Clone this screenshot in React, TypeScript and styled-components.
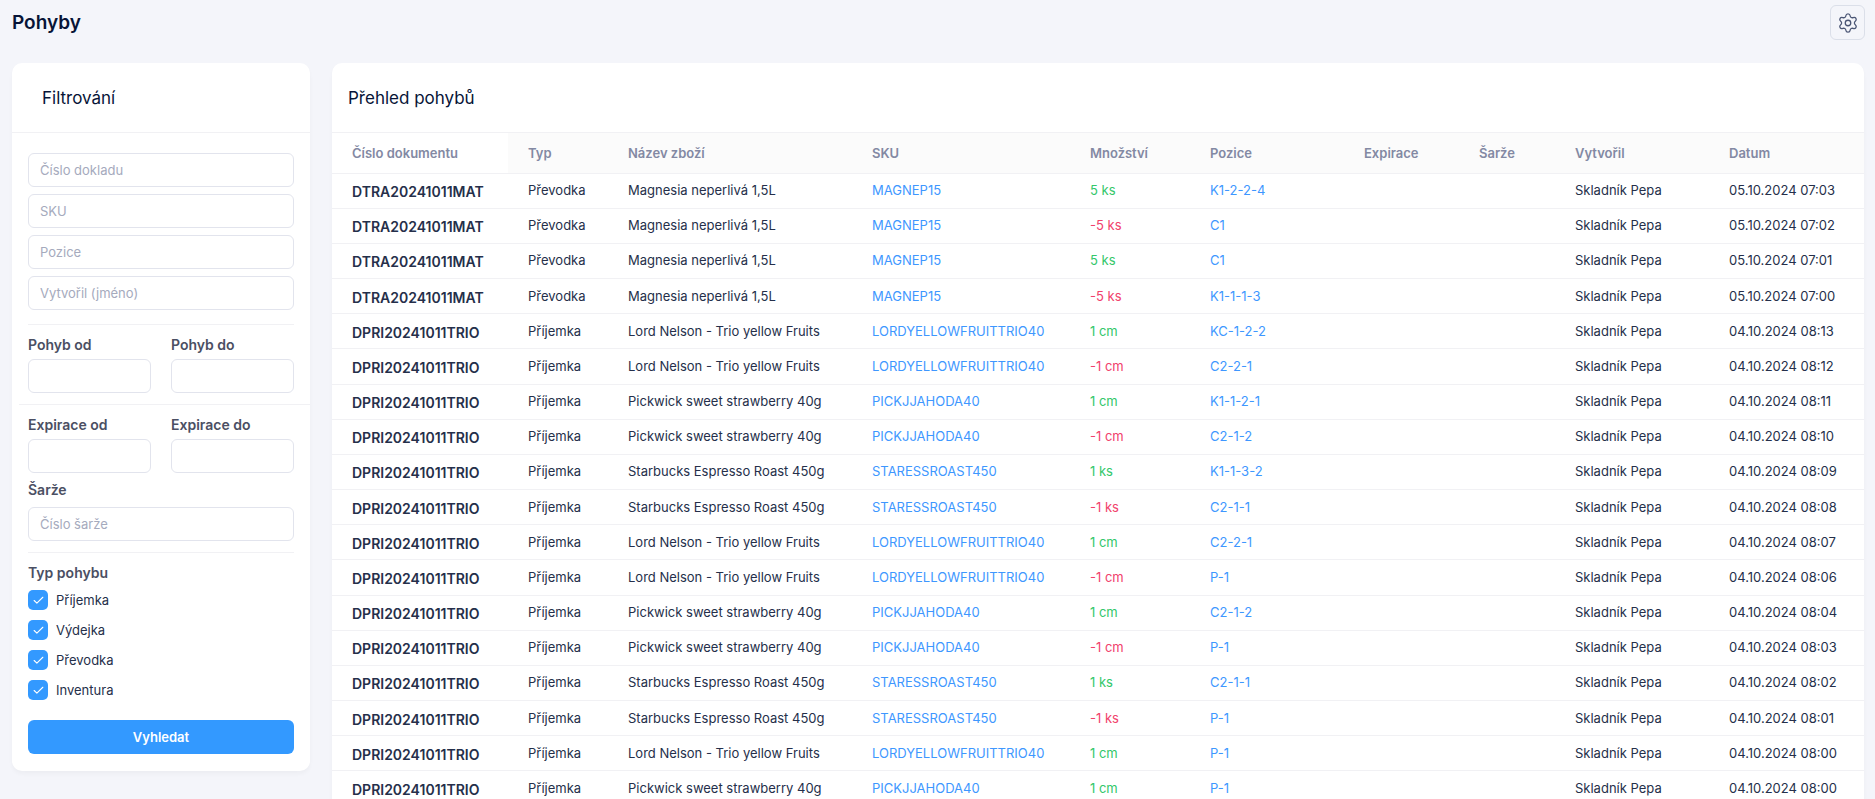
import styled, { createGlobalStyle } from 'styled-components'
import { Check, Settings } from 'lucide-react'

const GlobalStyle = createGlobalStyle`
  html, body {
    margin: 0;
    padding: 0;
    height: 100%;
    overflow: hidden;
    background: #f4f5fa;
    font-family: Inter, "Noto Sans", sans-serif;
    color: #252f4a;
  }
  * {
    box-sizing: border-box;
  }
`

const Page = styled.div`
  height: 799px;
  overflow: hidden;
  padding: 5px 10px 0 12px;
`

const TopBar = styled.header`
  display: flex;
  align-items: center;
  justify-content: space-between;
  height: 35px;
  margin-bottom: 23px;
`

const PageTitle = styled.h1`
  margin: 0;
  font-size: 19px;
  font-weight: 600;
  line-height: 24px;
  color: #071437;
`

const IconButton = styled.button`
  display: flex;
  align-items: center;
  justify-content: center;
  width: 35px;
  height: 35px;
  padding: 0;
  background: transparent;
  border: 1px solid #dbdfe9;
  border-radius: 6px;
  color: #4b5675;
`

const Content = styled.main`
  display: flex;
  align-items: flex-start;
  gap: 22px;
  padding-right: 1px;
`

const Card = styled.section`
  background: #fff;
  border-radius: 10px;
  box-shadow: 0 3px 4px rgba(0, 0, 0, 0.03);
`

const FilterCard = styled(Card)`
  flex: 0 0 298px;
  height: 708px;
`

const TableCard = styled(Card)`
  flex: 1;
  border-radius: 10px 10px 0 0;
`

const CardHeader = styled.div<{ $inset: number }>`
  display: flex;
  align-items: center;
  height: 70px;
  padding-left: ${(p) => p.$inset}px;
  border-bottom: 1px solid #f1f1f4;
`

const CardTitle = styled.h2`
  margin: 0;
  font-size: 17px;
  font-weight: 400;
  color: #071437;
`

const FilterForm = styled.form`
  display: flex;
  flex-direction: column;
  padding: 20px 16px 0;
`

const Stack = styled.div`
  display: flex;
  flex-direction: column;
  gap: 7px;
`

const Divider = styled.hr<{ $wide?: boolean; $top?: number }>`
  height: 1px;
  border: 0;
  background: #f1f1f4;
  margin: ${(p) => (p.$wide ? '11px -16px 10px -9px' : `${p.$top ?? 11}px 0 10px`)};
`

const FieldPair = styled.div`
  display: grid;
  grid-template-columns: 123px 123px;
  column-gap: 20px;
`

const FieldLabel = styled.label<{ $gap?: number; $top?: number }>`
  display: block;
  font-size: 14px;
  font-weight: 600;
  line-height: 20px;
  color: #4b4f63;
  margin-top: ${(p) => p.$top ?? 0}px;
  margin-bottom: ${(p) => p.$gap ?? 4}px;
`

const TextInput = styled.input`
  display: block;
  width: 100%;
  height: 34px;
  padding: 0 11px;
  background: #fff;
  border: 1px solid #e2e4ed;
  border-radius: 6px;
  font-family: inherit;
  font-size: 13px;
  color: #252f4a;

  &::placeholder {
    color: #a5aabd;
    opacity: 1;
  }
`

const CheckList = styled.div`
  display: flex;
  flex-direction: column;
  gap: 10px;
  margin-top: 7px;
`

const CheckRow = styled.label`
  display: flex;
  align-items: center;
  gap: 8px;
  height: 20px;
  font-size: 13px;
  color: #252f4a;
`

const CheckBox = styled.span`
  display: flex;
  align-items: center;
  justify-content: center;
  width: 20px;
  height: 20px;
  border-radius: 5px;
  background: #3399ff;
  color: #fff;
`

const SubmitButton = styled.button`
  height: 34px;
  margin-top: 20px;
  background: #3399ff;
  border: 0;
  border-radius: 6px;
  color: #fff;
  font-family: inherit;
  font-size: 13px;
  font-weight: 600;
`

const Table = styled.table`
  width: 100%;
  table-layout: fixed;
  border-collapse: collapse;
  font-size: 13px;
`

const HeadCell = styled.th<{ $sticky?: boolean }>`
  height: 40px;
  padding: 0 0 0 20px;
  text-align: left;
  font-size: 13px;
  font-weight: 600;
  color: #8389a3;
  background: ${(p) => (p.$sticky ? '#fff' : '#fbfbfb')};
  border-bottom: 1px solid #f1f1f4;
`

const Row = styled.tr`
  height: 35.18px;
  border-bottom: 1px solid #f1f1f4;
`

const Cell = styled.td`
  padding: 0 0 1px 20px;
  color: #252f4a;
  white-space: nowrap;
`

const DocCell = styled.td`
  padding: 2px 0 0 20px;
  font-size: 14px;
  font-weight: 600;
  color: #252f4a;
  white-space: nowrap;
`

const LinkCell = styled(Cell)`
  color: #3e97ff;
`

const AmountCell = styled(Cell)<{ $negative: boolean }>`
  color: ${(p) => (p.$negative ? '#f1416c' : '#33c76a')};
`

const columns = [176, 100, 244, 218, 120, 154, 115, 96, 154, 155]

const headers = ['Typ', 'Název zboží', 'SKU', 'Množství', 'Pozice', 'Expirace', 'Šarže', 'Vytvořil', 'Datum']

const products = {
  magnesia: { name: 'Magnesia neperlivá 1,5L', sku: 'MAGNEP15' },
  lord: { name: 'Lord Nelson - Trio yellow Fruits', sku: 'LORDYELLOWFRUITTRIO40' },
  pickwick: { name: 'Pickwick sweet strawberry 40g', sku: 'PICKJJAHODA40' },
  starbucks: { name: 'Starbucks Espresso Roast 450g', sku: 'STARESSROAST450' },
}

type ProductKey = keyof typeof products

const transfer = (amount: string, position: string, date: string) => ({
  doc: 'DTRA20241011MAT',
  type: 'Převodka',
  product: 'magnesia' as ProductKey,
  amount,
  position,
  date,
})

const receipt = (product: ProductKey, amount: string, position: string, date: string) => ({
  doc: 'DPRI20241011TRIO',
  type: 'Příjemka',
  product,
  amount,
  position,
  date,
})

const rows = [
  transfer('5 ks', 'K1-2-2-4', '05.10.2024 07:03'),
  transfer('-5 ks', 'C1', '05.10.2024 07:02'),
  transfer('5 ks', 'C1', '05.10.2024 07:01'),
  transfer('-5 ks', 'K1-1-1-3', '05.10.2024 07:00'),
  receipt('lord', '1 cm', 'KC-1-2-2', '04.10.2024 08:13'),
  receipt('lord', '-1 cm', 'C2-2-1', '04.10.2024 08:12'),
  receipt('pickwick', '1 cm', 'K1-1-2-1', '04.10.2024 08:11'),
  receipt('pickwick', '-1 cm', 'C2-1-2', '04.10.2024 08:10'),
  receipt('starbucks', '1 ks', 'K1-1-3-2', '04.10.2024 08:09'),
  receipt('starbucks', '-1 ks', 'C2-1-1', '04.10.2024 08:08'),
  receipt('lord', '1 cm', 'C2-2-1', '04.10.2024 08:07'),
  receipt('lord', '-1 cm', 'P-1', '04.10.2024 08:06'),
  receipt('pickwick', '1 cm', 'C2-1-2', '04.10.2024 08:04'),
  receipt('pickwick', '-1 cm', 'P-1', '04.10.2024 08:03'),
  receipt('starbucks', '1 ks', 'C2-1-1', '04.10.2024 08:02'),
  receipt('starbucks', '-1 ks', 'P-1', '04.10.2024 08:01'),
  receipt('lord', '1 cm', 'P-1', '04.10.2024 08:00'),
  receipt('pickwick', '1 cm', 'P-1', '04.10.2024 08:00'),
]

const moveTypes = ['Příjemka', 'Výdejka', 'Převodka', 'Inventura']

function Filters() {
  return (
    <FilterCard>
      <CardHeader $inset={30}>
        <CardTitle>Filtrování</CardTitle>
      </CardHeader>
      <FilterForm>
        <Stack>
          <TextInput placeholder="Číslo dokladu" />
          <TextInput placeholder="SKU" />
          <TextInput placeholder="Pozice" />
          <TextInput placeholder="Vytvořil (jméno)" />
        </Stack>
        <Divider $top={14} />
        <FieldPair>
          <div>
            <FieldLabel>Pohyb od</FieldLabel>
            <TextInput />
          </div>
          <div>
            <FieldLabel>Pohyb do</FieldLabel>
            <TextInput />
          </div>
        </FieldPair>
        <Divider $wide />
        <FieldPair>
          <div>
            <FieldLabel>Expirace od</FieldLabel>
            <TextInput />
          </div>
          <div>
            <FieldLabel>Expirace do</FieldLabel>
            <TextInput />
          </div>
        </FieldPair>
        <FieldLabel $top={7} $gap={7}>Šarže</FieldLabel>
        <TextInput placeholder="Číslo šarže" />
        <Divider />
        <FieldLabel $gap={0}>Typ pohybu</FieldLabel>
        <CheckList>
          {moveTypes.map((type) => (
            <CheckRow key={type}>
              <CheckBox>
                <Check size={13} strokeWidth={2} />
              </CheckBox>
              {type}
            </CheckRow>
          ))}
        </CheckList>
        <SubmitButton type="button">Vyhledat</SubmitButton>
      </FilterForm>
    </FilterCard>
  )
}

function Movements() {
  return (
    <TableCard>
      <CardHeader $inset={16}>
        <CardTitle>Přehled pohybů</CardTitle>
      </CardHeader>
      <Table>
        <colgroup>
          {columns.map((width, i) => (
            <col key={i} width={width} />
          ))}
        </colgroup>
        <thead>
          <tr>
            <HeadCell $sticky>Číslo dokumentu</HeadCell>
            {headers.map((title) => (
              <HeadCell key={title}>{title}</HeadCell>
            ))}
          </tr>
        </thead>
        <tbody>
          {rows.map((row, i) => (
            <Row key={i}>
              <DocCell>{row.doc}</DocCell>
              <Cell>{row.type}</Cell>
              <Cell>{products[row.product].name}</Cell>
              <LinkCell>{products[row.product].sku}</LinkCell>
              <AmountCell $negative={row.amount.startsWith('-')}>{row.amount}</AmountCell>
              <LinkCell>{row.position}</LinkCell>
              <Cell />
              <Cell />
              <Cell>Skladník Pepa</Cell>
              <Cell>{row.date}</Cell>
            </Row>
          ))}
        </tbody>
      </Table>
    </TableCard>
  )
}

export default function App() {
  return (
    <>
      <GlobalStyle />
      <Page>
        <TopBar>
          <PageTitle>Pohyby</PageTitle>
          <IconButton type="button" aria-label="Nastavení">
            <Settings size={22} strokeWidth={1.4} />
          </IconButton>
        </TopBar>
        <Content>
          <Filters />
          <Movements />
        </Content>
      </Page>
    </>
  )
}
